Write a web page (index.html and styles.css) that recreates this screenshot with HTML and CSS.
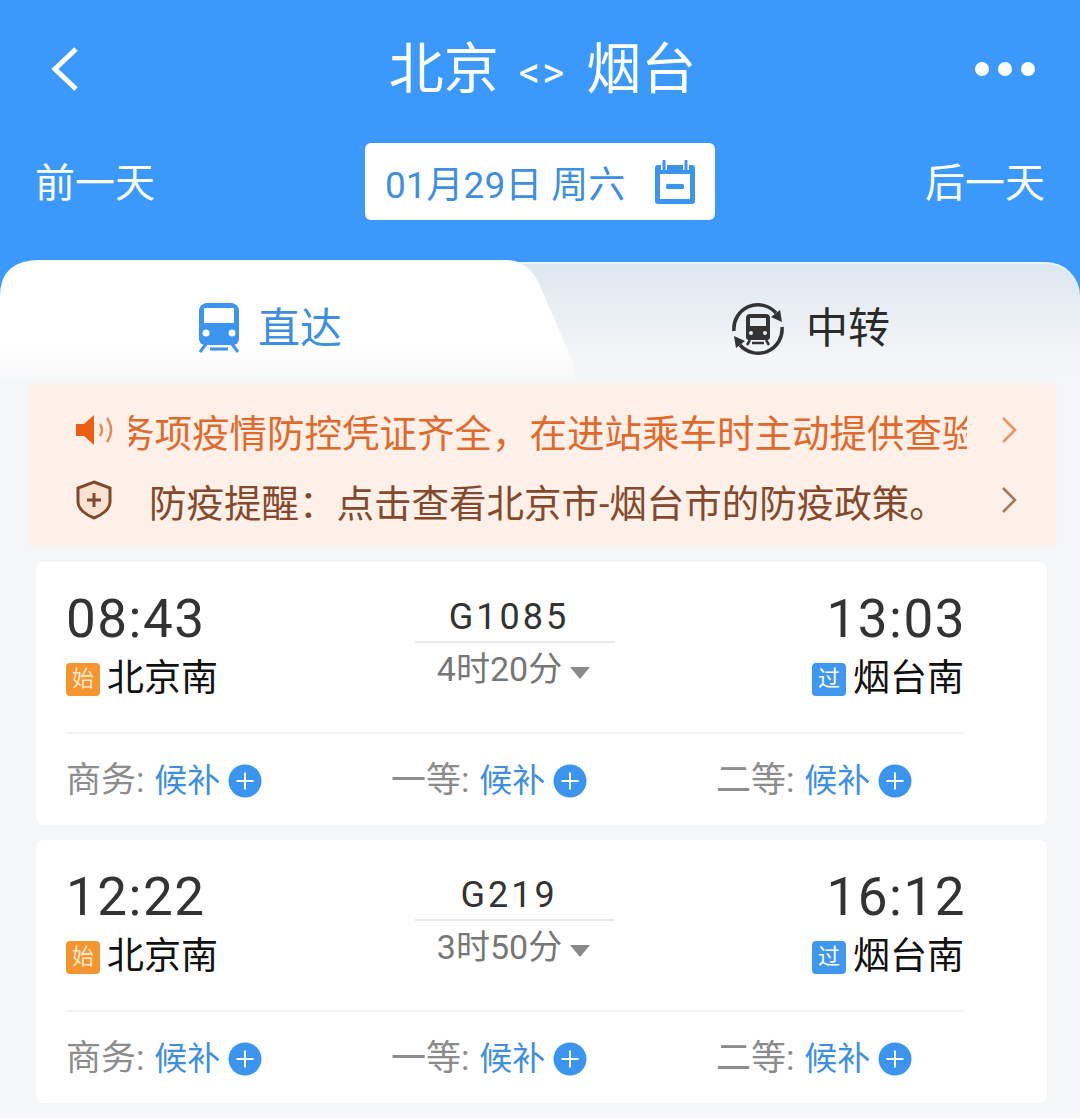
FILE: index.html
```html
<!DOCTYPE html>
<html lang="zh-CN">
<head>
    <meta charset="UTF-8">
    <meta name="viewport" content="width=device-width, initial-scale=1.0">
    <title>北京 - 烟台</title>
    <link rel="stylesheet" href="styles.css">
</head>
<body>

<svg class="defs" width="0" height="0">
    <symbol id="plus-circle" viewBox="0 0 34 34">
        <circle cx="17" cy="17" r="16.5" fill="#3b94ee"/>
        <path d="M17 8.5v17M8.5 17h17" stroke="#fff" stroke-width="2" fill="none"/>
    </symbol>
    <symbol id="chevron" viewBox="0 0 16 28">
        <path d="M2 2l12 12L2 26" stroke="currentColor" stroke-width="2.6" fill="none"/>
    </symbol>
</svg>

<header class="header">
    <div class="title-row">
        <div class="title-side">
            <svg class="back-icon" viewBox="0 0 30 44"><path d="M26 2L5 22l21 20" stroke="#fff" stroke-width="5" fill="none"/></svg>
        </div>
        <h1 class="title">北京<span class="title-arrows">&lt;&gt;</span>烟台</h1>
        <div class="title-side more-dots"><i></i><i></i><i></i></div>
    </div>
    <div class="date-row">
        <span class="day-link">前一天</span>
        <div class="date-box">
            <span class="date-text">01月29日 周六</span>
            <svg class="calendar-icon" viewBox="0 0 42 44">
                <path d="M4 5h34a3 3 0 0 1 3 3v33a3 3 0 0 1-3 3H4a3 3 0 0 1-3-3V8a3 3 0 0 1 3-3z" fill="#3b94ee"/>
                <rect x="6" y="14" width="30" height="25" fill="#fff"/>
                <rect x="12" y="24" width="18" height="5" rx="1.5" fill="#3b94ee"/>
                <path d="M10 1v9M32 1v9" stroke="#fff" stroke-width="6"/>
                <path d="M10 1v8M32 1v8" stroke="#3b94ee" stroke-width="3" stroke-linecap="round"/>
            </svg>
        </div>
        <span class="day-link">后一天</span>
    </div>
</header>

<div class="tabs">
    <div class="tab tab-direct">
        <svg class="train-icon" viewBox="0 0 42 50">
            <path d="M9 0h24a8 8 0 0 1 8 8v28a6 6 0 0 1-6 6H7a6 6 0 0 1-6-6V8a8 8 0 0 1 8-8z" fill="#3b94ee"/>
            <rect x="6" y="5" width="30" height="15" rx="1" fill="#fff"/>
            <circle cx="8" cy="30" r="3.5" fill="#fff"/>
            <circle cx="34" cy="30" r="3.5" fill="#fff"/>
            <path d="M8 41L2 49M34 41l6 8M12 46h18" stroke="#3b94ee" stroke-width="3" fill="none"/>
        </svg>
        <span>直达</span>
    </div>
    <div class="tab tab-transfer">
        <svg class="transfer-icon" viewBox="0 0 56 56">
            <path d="M4 30A24 24 0 0 1 46 12" stroke="#333" stroke-width="3.500" fill="none"/>
            <path d="M52 26A24 24 0 0 1 10 44" stroke="#333" stroke-width="3.500" fill="none"/>
            <path d="M50 9l2 12-11-5zM6 47L4 35l11 5z" fill="#333"/>
            <path d="M20 13h16a4 4 0 0 1 4 4v19a3 3 0 0 1-3 3H19a3 3 0 0 1-3-3V17a4 4 0 0 1 4-4z" fill="#333"/>
            <rect x="20" y="17" width="16" height="8" fill="#e8edf1"/>
            <circle cx="21" cy="32" r="2" fill="#e8edf1"/>
            <circle cx="35" cy="32" r="2" fill="#e8edf1"/>
            <path d="M20 39l-3 5M36 39l3 5M22 42h12" stroke="#333" stroke-width="2.500" fill="none"/>
        </svg>
        <span>中转</span>
    </div>
</div>

<section class="notice">
    <div class="notice-row notice-row-warn">
        <svg class="speaker-icon" viewBox="0 0 40 32">
            <path d="M0 10h8L18 1v30L8 22H0z" fill="#ea5f14"/>
            <path d="M24 10q4 6 0 12M31 4q8 12 0 24" stroke="#e98a58" stroke-width="2.500" fill="none"/>
        </svg>
        <div class="notice-clip"><span class="notice-scroll">务项疫情防控凭证齐全，在进站乘车时主动提供查验</span></div>
        <svg class="chevron"><use href="#chevron"/></svg>
    </div>
    <div class="notice-row notice-row-info">
        <svg class="shield-icon" viewBox="0 0 36 40">
            <path d="M18 2l16 6v14c0 7-8 13-16 16C10 35 2 29 2 22V8z" stroke="#7f4a2c" stroke-width="3" fill="#fbe3d4"/>
            <path d="M18 13v14M11 20h14" stroke="#7f4a2c" stroke-width="3"/>
        </svg>
        <div class="notice-text">防疫提醒：点击查看北京市-烟台市的防疫政策。</div>
        <svg class="chevron"><use href="#chevron"/></svg>
    </div>
</section>

<article class="card">
    <div class="card-main">
        <div class="stop">
            <div class="time">08:43</div>
            <div class="station"><span class="tag tag-start">始</span>北京南</div>
        </div>
        <div class="trip">
            <div class="train-no">G1085</div>
            <div class="duration">4时20分<i class="caret"></i></div>
        </div>
        <div class="stop stop-end">
            <div class="time">13:03</div>
            <div class="station"><span class="tag tag-pass">过</span>烟台南</div>
        </div>
    </div>
    <div class="seats">
        <div class="seat">商务: <b>候补</b><svg class="plus"><use href="#plus-circle"/></svg></div>
        <div class="seat">一等: <b>候补</b><svg class="plus"><use href="#plus-circle"/></svg></div>
        <div class="seat">二等: <b>候补</b><svg class="plus"><use href="#plus-circle"/></svg></div>
    </div>
</article>

<article class="card">
    <div class="card-main">
        <div class="stop">
            <div class="time">12:22</div>
            <div class="station"><span class="tag tag-start">始</span>北京南</div>
        </div>
        <div class="trip">
            <div class="train-no">G219</div>
            <div class="duration">3时50分<i class="caret"></i></div>
        </div>
        <div class="stop stop-end">
            <div class="time">16:12</div>
            <div class="station"><span class="tag tag-pass">过</span>烟台南</div>
        </div>
    </div>
    <div class="seats">
        <div class="seat">商务: <b>候补</b><svg class="plus"><use href="#plus-circle"/></svg></div>
        <div class="seat">一等: <b>候补</b><svg class="plus"><use href="#plus-circle"/></svg></div>
        <div class="seat">二等: <b>候补</b><svg class="plus"><use href="#plus-circle"/></svg></div>
    </div>
</article>

</body>
</html>
```

FILE: styles.css
```css
body {
    margin: 0;
    height: 1118px;
    overflow: hidden;
    background-color: #f5f6f8;
    color: #222;
    font-family: 'Roboto', 'Noto Sans CJK SC', sans-serif;
}

.defs {
    display: block;
    height: 0;
}

/* header */
.header {
    height: 260px;
    background-color: #3b99fc;
    color: #fff;
    box-sizing: border-box;
    padding-top: 34px;
}

.title-row {
    display: flex;
    align-items: center;
    height: 70px;
    padding: 0 45px 0 50px;
}

.title-side {
    flex: 1;
    display: flex;
    align-items: center;
}

.back-icon {
    width: 30px;
    height: 44px;
}

.title {
    margin: 0;
    font-size: 55px;
    line-height: 70px;
    font-weight: 400;
    display: flex;
    align-items: center;
}

.title-arrows {
    font-size: 42px;
    letter-spacing: 2px;
    margin: 8px 20px 0 20px;
}

.more-dots {
    justify-content: flex-end;
    gap: 9px;
}

.more-dots i {
    width: 14px;
    height: 14px;
    border-radius: 50%;
    background-color: #fff;
}

.date-row {
    display: flex;
    justify-content: space-between;
    align-items: center;
    margin-top: 39px;
    padding: 0 35px;
}

.day-link {
    font-size: 40px;
    line-height: 50px;
    padding-top: 4px;
}

.date-box {
    display: flex;
    align-items: center;
    justify-content: space-between;
    width: 350px;
    height: 77px;
    box-sizing: border-box;
    padding: 0 19px 0 20px;
    background-color: #fff;
    border-radius: 6px;
    color: #3f8fe0;
}

.date-text {
    font-size: 37px;
    white-space: nowrap;
}

.calendar-icon {
    width: 42px;
    height: 44px;
}

/* tabs */
.tabs {
    display: flex;
    height: 121px;
    background: linear-gradient(#3b99fc 40px, transparent 40px);
    font-size: 42px;
}

.tab {
    display: flex;
    align-items: center;
    height: 100%;
    box-sizing: border-box;
}

.tab-direct {
    position: relative;
    z-index: 1;
    width: 576px;
    flex: none;
    padding: 8px 0 0 198px;
    gap: 18px;
    color: #3f8fe0;
    background: linear-gradient(#fff 70%, #f6f7f8);
    clip-path: path('M0 121V36Q0 0 40 0H505Q530 0 541 28L570 96Q576 112 576 121Z');
}

.tab-transfer {
    flex: 1;
    margin-left: -100px;
    margin-top: 2px;
    height: 119px;
    padding: 4px 0 0 254px;
    gap: 20px;
    color: #2a2a2a;
    border-top: 2px solid #eef4fa;
    border-radius: 0 34px 0 0;
    background: linear-gradient(#dde7f0, #f3f5f7 75%, #f5f6f8);
}

.train-icon {
    width: 42px;
    height: 50px;
    margin-top: 6px;
}

.transfer-icon {
    width: 56px;
    height: 56px;
    margin-top: 8px;
}

/* notices */
.notice {
    margin: 4px 25px 0 30px;
    height: 160px;
    box-sizing: border-box;
    padding: 10px 38px 0 46px;
    background-color: #fdf0e8;
    box-shadow: 0 0 6px #fdf0e8;
}

.notice-row {
    display: flex;
    align-items: center;
    height: 70px;
    font-size: 37.5px;
    white-space: nowrap;
}

.notice-row-warn {
    color: #e0692b;
}

.notice-row-info {
    color: #84492a;
}

.speaker-icon {
    width: 40px;
    height: 32px;
    flex: none;
}

.shield-icon {
    width: 36px;
    height: 40px;
    flex: none;
}

.notice-clip {
    width: 838px;
    margin-left: 13px;
    overflow: hidden;
}

.notice-scroll {
    display: block;
    margin-left: -12px;
}

.notice-text {
    flex: 1;
    margin-left: 37px;
}

.chevron {
    width: 16px;
    height: 28px;
    flex: none;
    margin-left: auto;
    color: #e8955f;
}

.notice-row-info .chevron {
    color: #a07a60;
}

/* train cards */
.card {
    margin: 17px 33px 0 36px;
    height: 263px;
    box-sizing: border-box;
    padding-left: 30px;
    background-color: #fff;
    border-radius: 8px;
}

.card + .card {
    margin-top: 15px;
}

.card-main {
    display: flex;
    justify-content: space-between;
    width: 898px;
    height: 172px;
    box-sizing: border-box;
    padding-top: 27px;
    border-bottom: 2px solid #f3f4f5;
}

.stop {
    flex: 1;
}

.stop-end {
    text-align: right;
}

.time {
    font-size: 53px;
    line-height: 60px;
    letter-spacing: 1.5px;
    color: #333;
}

.stop-end .time {
    margin-right: -2px;
}

.station {
    display: flex;
    align-items: center;
    font-size: 37px;
    line-height: 54px;
    margin-top: 3px;
    color: #111;
}

.stop-end .station {
    justify-content: flex-end;
}

.tag {
    display: flex;
    align-items: center;
    justify-content: center;
    width: 34px;
    height: 33px;
    margin-right: 7px;
    border-radius: 4px;
    font-size: 22px;
    color: #fff;
}

.tag-start {
    background-color: #f4952f;
    color: #fde8cf;
}

.tag-pass {
    background-color: #3f97ef;
}

.trip {
    width: 200px;
    flex: none;
    text-align: center;
    color: #555;
}

.train-no {
    height: 52px;
    text-indent: -12px;
    border-bottom: 2px solid #e8e9ea;
    font-size: 36px;
    line-height: 56px;
    letter-spacing: 3px;
    color: #333;
}

.duration {
    font-size: 34px;
    line-height: 52px;
    margin-left: -3px;
    color: #777;
    white-space: nowrap;
}

.caret {
    display: inline-block;
    margin-left: 8px;
    vertical-align: 2px;
    border-left: 10px solid transparent;
    border-right: 10px solid transparent;
    border-top: 12px solid #8a8a8a;
}

.seats {
    display: grid;
    grid-template-columns: repeat(3, 325px);
    padding-top: 20px;
}

.seat {
    display: flex;
    align-items: center;
    font-size: 35px;
    line-height: 54px;
    color: #8c8c8c;
    white-space: pre;
}

.seat b {
    font-weight: 400;
    font-size: 33px;
    margin-left: 1px;
    color: #3f8fe0;
}

.plus {
    width: 34px;
    height: 34px;
    margin-left: 8px;
}
```
